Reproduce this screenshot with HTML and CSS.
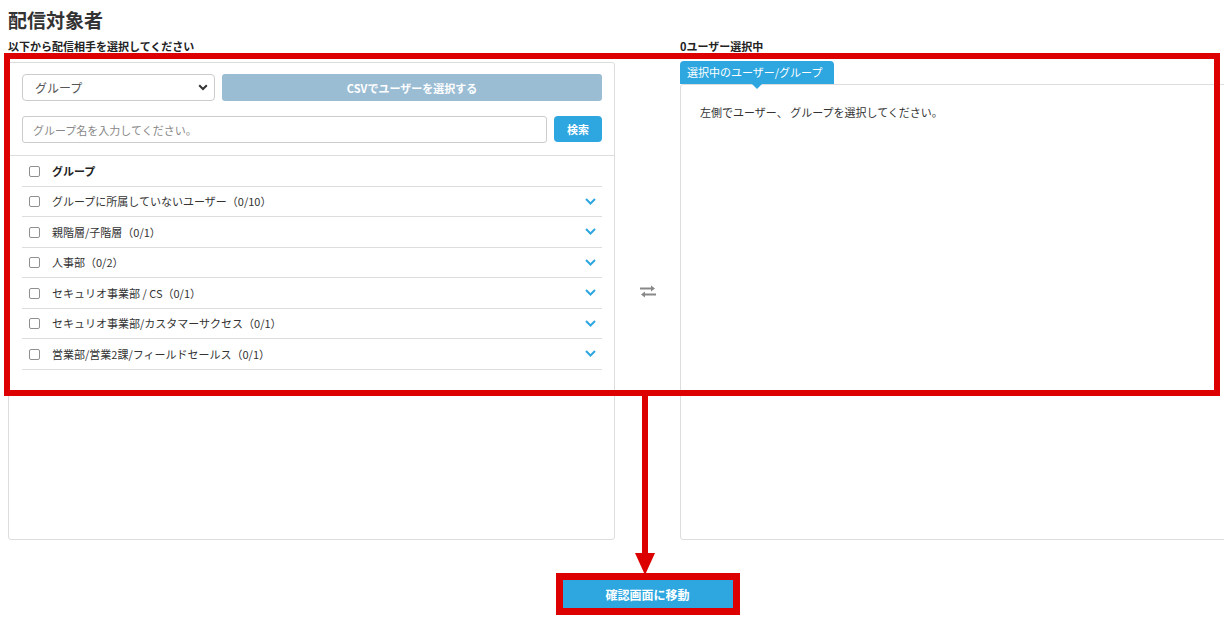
FILE: index.html
```html
<!DOCTYPE html>
<html lang="ja">
<head>
    <meta charset="UTF-8">
    <meta name="viewport" content="width=device-width, initial-scale=1.0">
    <title>配信対象者</title>
    <link rel="stylesheet" href="styles.css">
</head>
<body>
    <div class="page">
        <div class="page-inner">
            <h1 class="title">配信対象者</h1>

            <div class="picker">
                <div class="col">
                    <p class="col-label">以下から配信相手を選択してください</p>
                    <div class="panel source">
                        <div class="controls">
                            <div class="controls-row">
                                <div class="select">
                                    <span>グループ</span>
                                    <svg width="10" height="7" viewBox="0 0 10 7"><path d="M1.2 1.2L5 5l3.8-3.8" fill="none" stroke="#333" stroke-width="2"/></svg>
                                </div>
                                <button class="btn-csv">CSVでユーザーを選択する</button>
                            </div>
                            <div class="controls-row">
                                <input type="text" class="search" placeholder="グループ名を入力してください。">
                                <button class="btn-search">検索</button>
                            </div>
                        </div>

                        <ul class="group-list">
                            <li class="group head">
                                <input type="checkbox"><span class="name">グループ</span>
                            </li>
                            <li class="group">
                                <input type="checkbox"><span class="name">グループに所属していないユーザー（0/10）</span>
                                <svg class="chev" width="11" height="7" viewBox="0 0 11 7"><path d="M1 1l4.5 4.5L10 1" fill="none" stroke="#2ea7e0" stroke-width="2"/></svg>
                            </li>
                            <li class="group">
                                <input type="checkbox"><span class="name">親階層/子階層（0/1）</span>
                                <svg class="chev" width="11" height="7" viewBox="0 0 11 7"><path d="M1 1l4.5 4.5L10 1" fill="none" stroke="#2ea7e0" stroke-width="2"/></svg>
                            </li>
                            <li class="group">
                                <input type="checkbox"><span class="name">人事部（0/2）</span>
                                <svg class="chev" width="11" height="7" viewBox="0 0 11 7"><path d="M1 1l4.5 4.5L10 1" fill="none" stroke="#2ea7e0" stroke-width="2"/></svg>
                            </li>
                            <li class="group">
                                <input type="checkbox"><span class="name">セキュリオ事業部 / CS（0/1）</span>
                                <svg class="chev" width="11" height="7" viewBox="0 0 11 7"><path d="M1 1l4.5 4.5L10 1" fill="none" stroke="#2ea7e0" stroke-width="2"/></svg>
                            </li>
                            <li class="group">
                                <input type="checkbox"><span class="name">セキュリオ事業部/カスタマーサクセス（0/1）</span>
                                <svg class="chev" width="11" height="7" viewBox="0 0 11 7"><path d="M1 1l4.5 4.5L10 1" fill="none" stroke="#2ea7e0" stroke-width="2"/></svg>
                            </li>
                            <li class="group">
                                <input type="checkbox"><span class="name">営業部/営業2課/フィールドセールス（0/1）</span>
                                <svg class="chev" width="11" height="7" viewBox="0 0 11 7"><path d="M1 1l4.5 4.5L10 1" fill="none" stroke="#2ea7e0" stroke-width="2"/></svg>
                            </li>
                        </ul>
                    </div>
                </div>

                <div class="swap">
                    <svg width="18" height="14" viewBox="0 0 18 14">
                        <path d="M1 4.5h13" stroke="#888" stroke-width="2"/>
                        <path d="M12 1.5l4 3-4 3z" fill="#888"/>
                        <path d="M17 10.5H4" stroke="#888" stroke-width="2"/>
                        <path d="M6 7.5l-4 3 4 3z" fill="#888"/>
                    </svg>
                </div>

                <div class="col">
                    <p class="col-label">0ユーザー選択中</p>
                    <div class="tab">選択中のユーザー/グループ</div>
                    <div class="panel target">
                        <p class="empty">左側でユーザー、 グループを選択してください。</p>
                    </div>
                </div>
            </div>

            <div class="actions">
                <button class="btn-next">確認画面に移動</button>
            </div>
        </div>
    </div>

    <!-- annotation overlay -->
    <div class="callout"></div>
    <div class="arrow-line"></div>
    <div class="arrow-head"></div>
</body>
</html>
```

FILE: styles.css
```css
html {
    overflow: hidden;
}

body {
    margin: 0;
    min-height: 100vh;
    font-family: "Noto Sans CJK JP", "Noto Sans", sans-serif;
    color: #333;
    background-color: #fff;
}

/* the screen is wider than the window: clip at the right edge */
.page {
    overflow: hidden;
    padding: 8px 0 10px 8px;
}

.page-inner {
    width: 1279px;
}

.title {
    margin: 0;
    font-size: 19px;
    line-height: 24px;
    font-weight: bold;
    color: #333;
}

.picker {
    display: grid;
    grid-template-columns: 607px 65px 607px;
    margin-top: 6px;
}

.col {
    display: flex;
    flex-direction: column;
}

.col-label {
    margin: 0 0 8px;
    font-size: 11px;
    line-height: 16px;
    font-weight: bold;
    color: #222;
}

.panel {
    border: 1px solid #ddd;
    border-radius: 3px;
    background-color: #fff;
}

.source {
    height: 478px;
    box-sizing: border-box;
}

.controls {
    padding: 11px 12px 12px 13px;
    border-bottom: 1px solid #ddd;
}

.controls-row {
    display: flex;
    gap: 7px;
}

.controls-row + .controls-row {
    margin-top: 15px;
}

.select {
    width: 193px;
    height: 27px;
    box-sizing: border-box;
    display: flex;
    align-items: center;
    justify-content: space-between;
    padding: 0 6px 0 12px;
    border: 1px solid #ccc;
    border-radius: 4px;
    font-size: 12px;
    color: #555;
}

.btn-csv {
    flex: 1;
    height: 27px;
    border: none;
    border-radius: 3px;
    background-color: #9bbdd4;
    color: #fff;
    font-family: inherit;
    font-size: 11px;
    font-weight: bold;
}

.search {
    flex: 1;
    height: 27px;
    box-sizing: border-box;
    padding: 0 10px;
    border: 1px solid #ccc;
    border-radius: 3px;
    font-family: inherit;
    font-size: 11px;
    color: #333;
}

.search::placeholder {
    color: #888;
}

.btn-search {
    width: 48px;
    height: 26px;
    border: none;
    border-radius: 4px;
    background-color: #2ea7e0;
    color: #fff;
    font-family: inherit;
    font-size: 11px;
    font-weight: bold;
}

.group-list {
    list-style: none;
    margin: 0;
    padding: 0 12px 0 13px;
}

.group {
    height: 29.5px;
    display: flex;
    align-items: center;
    border-bottom: 1px solid #ddd;
    font-size: 11px;
    color: #333;
}

.group input[type="checkbox"] {
    appearance: none;
    width: 11px;
    height: 11px;
    margin: 1px 12px 0 7px;
    border: 1px solid #8f8f8f;
    border-radius: 2px;
    background-color: #fff;
    flex-shrink: 0;
}

.group .name {
    flex: 1;
}

.group.head .name {
    font-weight: bold;
    color: #222;
}

.chev {
    margin-right: 6px;
}

.swap {
    display: flex;
    justify-content: center;
    align-self: center;
    margin-top: 4px;
}

.tab {
    align-self: flex-start;
    position: relative;
    height: 23px;
    margin-top: -1px;
    padding: 0 12px 0 7px;
    border-radius: 4px 4px 0 0;
    background-color: #2ea7e0;
    color: #fff;
    font-size: 11px;
    line-height: 23px;
}

.tab::after {
    content: "";
    position: absolute;
    left: 72px;
    top: 23px;
    border-left: 5px solid transparent;
    border-right: 5px solid transparent;
    border-top: 5px solid #2ea7e0;
}

.target {
    flex: 1;
    padding: 19px 19px;
}

.empty {
    margin: 0;
    font-size: 11px;
    line-height: 16px;
    color: #333;
}

.actions {
    display: flex;
    justify-content: center;
    margin-top: 40px;
}

.btn-next {
    width: 170px;
    height: 28px;
    border: none;
    background-color: #2ea7e0;
    color: #fff;
    font-family: inherit;
    font-size: 12px;
    font-weight: bold;
    outline: 7px solid #dc0000;
}

/* red annotation drawn over the screen */
.callout {
    position: absolute;
    left: 4px;
    top: 53px;
    width: 1216px;
    height: 343px;
    box-sizing: border-box;
    border: 6px solid #dc0000;
}

.arrow-line {
    position: absolute;
    left: 642px;
    top: 396px;
    width: 6px;
    height: 160px;
    background-color: #dc0000;
}

.arrow-head {
    position: absolute;
    left: 635px;
    top: 553px;
    border-left: 10px solid transparent;
    border-right: 10px solid transparent;
    border-top: 22px solid #dc0000;
}
```
